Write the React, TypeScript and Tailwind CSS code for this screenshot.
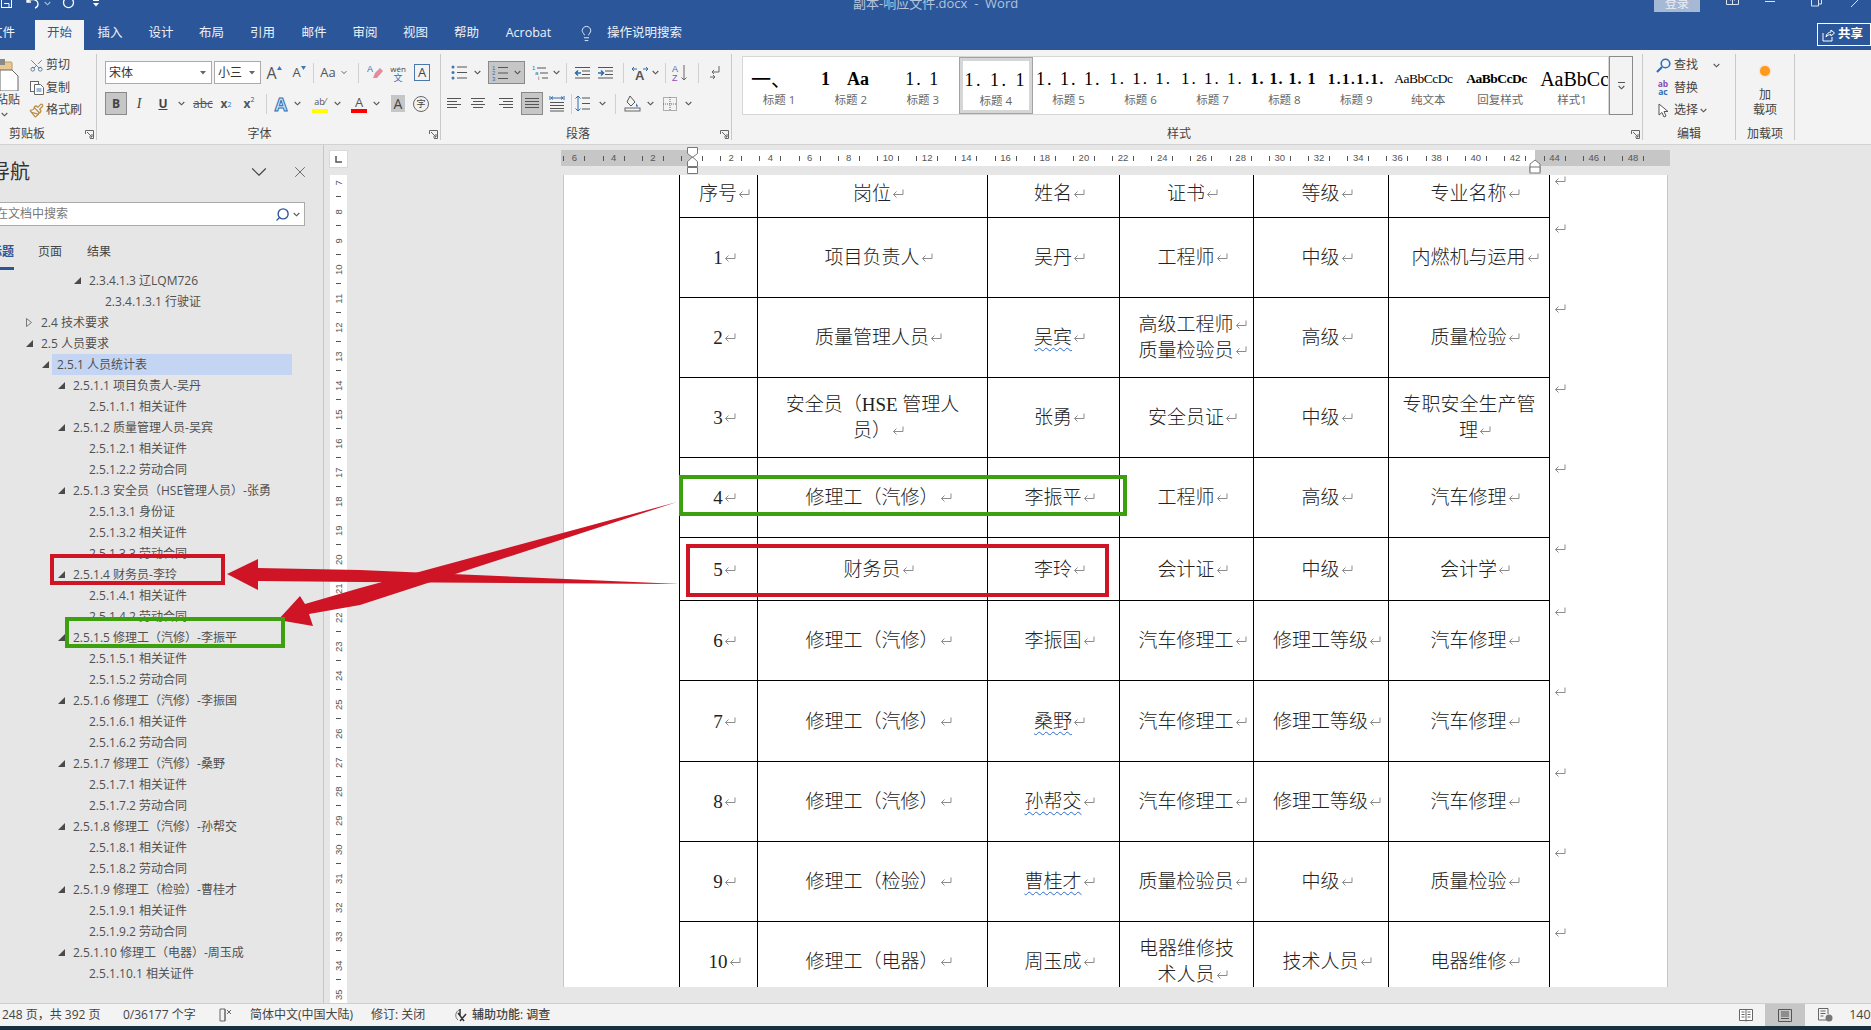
import React from 'react';
import { Scissors, Paintbrush, Lightbulb, Search, X, ChevronDown } from 'lucide-react';

const Chev = ({ c = '#555' }: { c?: string }) => (
  <svg width="7" height="5" viewBox="0 0 7 5" fill="none" stroke={c} strokeWidth="1.1"><path d="M.7 1l2.8 2.8L6.3 1" /></svg>
);
const Cell = ({ className = '', children }: { className?: string; children?: React.ReactNode }) => (
  <div className={`flex shrink-0 items-center justify-center ${className}`}>{children}</div>
);
const VSep = ({ className = '' }: { className?: string }) => (
  <div className={`flex h-full shrink-0 items-center justify-center ${className}`}><div className="h-[20px] w-px bg-[#d0d0d0]" /></div>
);
const Launcher = () => (
  <svg className="absolute bottom-[1px] right-[2px]" width="9" height="9" viewBox="0 0 9 9" fill="none" stroke="#666"><path d="M.5 4V.5h8V8.500H5M2 2l5 5M7 4v3H4" /></svg>
);
const Group = ({ className, label, lp = '', launcher, children }: { className: string; label: string; lp?: string; launcher?: boolean; children: React.ReactNode }) => (
  <div className={`relative flex h-[86px] shrink-0 flex-col border-r border-[#c9c9c9] ${className}`}>
    <div className="h-[72px] overflow-hidden">{children}</div>
    <div className={`h-[14px] text-center text-[12px] leading-[15px] text-[#444] ${lp}`}>{label}</div>
    {launcher && <Launcher />}
  </div>
);

type LK = 'l' | 'c' | 'r' | 'j';
const Lines = ({ k, dist }: { k: LK; dist?: boolean }) => {
  const w = [14, 10, 14, 10];
  return (
    <svg width="16" height="14" viewBox="0 0 16 14" stroke="#555" strokeWidth="1">
      {[1.5, 4.5, 7.5, 10.5].map((y, i) => {
        const len = k === 'j' ? 14 : w[i];
        const x = k === 'l' || k === 'j' ? 1 : k === 'c' ? 8 - len / 2 : 15 - len;
        return <line key={y} x1={x} x2={x + len} y1={y} y2={y} />;
      })}
      {dist && <path d="M3 1.500h10M3 1.500l2-1M13 1.500l-2-1" stroke="#2b6cb0" />}
    </svg>
  );
};
const Bullets = () => (
  <svg width="17" height="15" viewBox="0 0 17 15" stroke="#555">
    {[2, 7.5, 13].map(y => <g key={y}><circle cx="2" cy={y} r="1.500" fill="#3a78b8" stroke="none" /><line x1="6" x2="16" y1={y} y2={y} /></g>)}
  </svg>
);
const Numbered = () => (
  <svg width="17" height="16" viewBox="0 0 17 16" stroke="#555">
    {[2.500, 8, 13.500].map((y, i) => <g key={y}><text x="0" y={y + 2} fontSize="6" fill="#2f6fb5" stroke="none" fontFamily="Liberation Sans">{i + 1}</text><line x1="6" x2="16" y1={y} y2={y} /></g>)}
  </svg>
);
const Multi = () => (
  <svg width="17" height="16" viewBox="0 0 17 16" stroke="#555">
    <text x="0" y="5" fontSize="6" fill="#2f6fb5" stroke="none" fontFamily="Liberation Sans">1</text><line x1="5" x2="14" y1="3" y2="3" />
    <text x="3" y="10" fontSize="6" fill="#2f6fb5" stroke="none" fontFamily="Liberation Sans">a</text><line x1="8" x2="16" y1="8" y2="8" />
    <text x="6" y="15" fontSize="6" fill="#555" stroke="none" fontFamily="Liberation Sans">i</text><line x1="10" x2="16" y1="13" y2="13" />
  </svg>
);
const Indent = ({ dir }: { dir: 'l' | 'r' }) => (
  <svg width="17" height="14" viewBox="0 0 17 14" fill="none">
    <g stroke="#555"><line x1="1" x2="16" y1="1.500" y2="1.500" /><line x1="8" x2="16" y1="5" y2="5" /><line x1="8" x2="16" y1="8.500" y2="8.500" /><line x1="1" x2="16" y1="12" y2="12" /></g>
    <path d={dir === 'l' ? 'M7 7H1.500M4 4.500L1.500 7 4 9.500' : 'M1 7h5.500M4 4.500L6.500 7 4 9.500'} stroke="#2b6cb0" strokeWidth="1.500" />
  </svg>
);

const Tab = ({ className = '', children }: { className: string; children: React.ReactNode }) => (
  <div className={`flex h-full shrink-0 items-center justify-center pb-[4px] text-[12.500px] text-[#eef2f8] ${className}`}>{children}</div>
);

const TitleBar = () => (
  <div className="flex h-[20px] items-start overflow-hidden">
    <div className="flex w-[853px] shrink-0 items-start text-white">
      <svg className="ml-[1px] -mt-[5px]" width="11" height="14" viewBox="0 0 11 14" fill="none" stroke="#fff"><rect x=".5" y=".5" width="10" height="12" /><path d="M3 8.500h5v4H3" /></svg>
      <svg className="ml-[13px] -mt-[4px]" width="16" height="14" viewBox="0 0 16 14" fill="none" stroke="#fff" strokeWidth="1.300"><path d="M2 2v4h4M2 6c3-4 11-3 11 2 0 2-1 3.500-3 4" /></svg>
      <div className="ml-[3px] mt-[1px] opacity-60"><Chev c="#fff" /></div>
      <svg className="ml-[11px] -mt-[4px]" width="14" height="14" viewBox="0 0 14 14" fill="none" stroke="#fff" strokeWidth="1.300"><path d="M3 3a5 5 0 1 0 7 0M10 0v3h3" /></svg>
      <svg className="ml-[16px]" width="8" height="7" viewBox="0 0 8 7" fill="#fff"><rect x="1" y="0" width="6" height="1" /><path d="M1 3h6L4 6.500z" /></svg>
    </div>
    <div className="w-[161px] shrink-0 whitespace-pre text-[13px] leading-[13px] -mt-[3px] text-[#b3c4dd]">副本-响应文件.docx  -  Word</div>
    <div className="ml-[640px] flex h-[12px] w-[46px] shrink-0 justify-center overflow-hidden bg-[#a6b9d4] text-[12px] leading-[12px] text-[#e8eef6]"><span className="-mt-[2px]">登录</span></div>
    <svg className="ml-[26px] -mt-[2px]" width="13" height="9" viewBox="0 0 13 9" fill="none" stroke="#dbe4f0"><path d="M.5 0v6.500h12V0M6.500 6V1M4.500 2.500l2-2 2 2" /></svg>
    <div className="ml-[26px] mt-[1px] h-px w-[10px] bg-[#dbe4f0]" />
    <svg className="ml-[36px] -mt-[4px]" width="11" height="11" viewBox="0 0 11 11" fill="none" stroke="#dbe4f0"><path d="M.5 3v7h7V3zM3 3V.5h7.500V8H8" /></svg>
    <svg className="ml-[27px] -mt-[3px]" width="12" height="10" viewBox="0 0 12 10" fill="none" stroke="#dbe4f0"><path d="M2 10L12 0" /></svg>
  </div>
);

const TabBar = () => (
  <div className="flex h-[30px] items-stretch">
    <Tab className="w-[35px] justify-end overflow-hidden pr-[20px]"><span className="whitespace-nowrap">文件</span></Tab>
    <div className="flex h-full w-[49px] shrink-0 items-center justify-center bg-[#f3f3f3] pb-[4px] text-[12.500px] text-[#2b579a]">开始</div>
    <Tab className="w-[52px]">插入</Tab>
    <Tab className="w-[50px]">设计</Tab>
    <Tab className="w-[51px]">布局</Tab>
    <Tab className="w-[51px]">引用</Tab>
    <Tab className="w-[52px]">邮件</Tab>
    <Tab className="w-[50px]">审阅</Tab>
    <Tab className="w-[51px]">视图</Tab>
    <Tab className="w-[51px]">帮助</Tab>
    <Tab className="w-[73px]">Acrobat</Tab>
    <Tab className="w-[42px] pr-[0px]"><Lightbulb size={17} strokeWidth={1.300} color="#eef2f8" /></Tab>
    <Tab className="w-[80px] justify-start">操作说明搜索</Tab>
    <div className="flex-1" />
    <div className="mb-[4px] mt-[3px] flex w-[54px] shrink-0 items-center gap-[3px] border border-white pl-[4px] text-[12.500px] font-bold text-white">
      <svg width="13" height="14" viewBox="0 0 13 14" fill="none" stroke="#fff"><path d="M1 5v8h9V9M4 9c0-3 3-5 5-5V2l3.500 3L9 8V6.500C7 6.500 5 7.500 4 9z" /></svg>
      <span className="whitespace-nowrap">共享</span>
    </div>
  </div>
);

const ClipItem = ({ icon, text }: { icon: React.ReactNode; text: string }) => (
  <div className="flex h-[22.500px] items-center">
    <Cell className="w-[19px]">{icon}</Cell>
    <span className="whitespace-nowrap text-[12px] text-[#444]">{text}</span>
  </div>
);

const Clipboard = () => (
  <Group className="w-[97px]" label="剪贴板" lp="pr-[42px]" launcher>
    <div className="flex">
      <div className="flex w-[20px] shrink-0 flex-col items-end overflow-hidden pt-[4px]">
        <svg className="shrink-0" width="34" height="33" viewBox="0 0 34 33">
          <rect x="2" y="4" width="24" height="26" rx="1" fill="#e9c98f" stroke="#b89a63" />
          <rect x="9" y="1" width="10" height="6" fill="#8a8a8a" />
          <path d="M14 12h12l6 6v15H14z" fill="#fff" stroke="#666" />
        </svg>
        <span className="mt-[1px] whitespace-nowrap text-[12px] leading-[16px] text-[#444]">粘贴</span>
        <div className="mt-[4px] mr-[12px]"><Chev /></div>
      </div>
      <div className="ml-[7px]">
        <ClipItem icon={<Scissors size={15} color="#4a6f94" strokeWidth={1.300} className="-rotate-90" />} text="剪切" />
        <ClipItem icon={<svg width="14" height="14" viewBox="0 0 14 14" fill="#fff" stroke="#666"><rect x=".5" y=".5" width="8" height="10" /><path d="M4.500 3.500h6l3 3v7h-9z" /><path d="M6.500 8h5M6.500 10h5" stroke="#3a78b8" /></svg>} text="复制" />
        <ClipItem icon={<Paintbrush size={15} color="#b98d45" strokeWidth={2} />} text="格式刷" />
      </div>
    </div>
  </Group>
);

const Sel = ({ className, text }: { className: string; text: string }) => (
  <div className={`flex h-[23px] shrink-0 items-center justify-between border border-[#ababab] bg-white pl-[3px] pr-[5px] text-[12px] text-[#333] ${className}`}>
    <span className="whitespace-nowrap">{text}</span>
    <svg width="6" height="4" viewBox="0 0 6 4" fill="#666"><path d="M0 0h6L3 3.500z" /></svg>
  </div>
);
const BigA = ({ c = '#555', s = 'text-[16px]' }: { c?: string; s?: string }) => (
  <span className={`font-['Open_Sans',sans-serif] leading-none ${s}`} style={{ color: c }}>A</span>
);

const FontGroup = () => (
  <Group className="w-[344px]" label="字体" lp="pr-[18px]" launcher>
    <div className="flex h-[23px] mt-[7px] pl-[8px]">
      <Sel className="w-[107px]" text="宋体" />
      <Sel className="ml-[2px] w-[47px]" text="小三" />
      <Cell className="w-[26px] items-center gap-0"><BigA /><svg className="mb-[9px]" width="5" height="4" viewBox="0 0 5 4" fill="#3a78b8"><path d="M2.500 0L5 4H0z" /></svg></Cell>
      <Cell className="w-[24px]"><BigA s="text-[13px]" /><svg className="mb-[9px]" width="5" height="4" viewBox="0 0 5 4" fill="#3a78b8"><path d="M0 0h5L2.500 4z" /></svg></Cell>
      <VSep className="w-[4px]" />
      <Cell className="w-[26px] text-[13px] text-[#555]">Aa</Cell>
      <Cell className="w-[6px]"><Chev /></Cell>
      <div className="w-[9px]" />
      <VSep className="w-[4px]" />
      <Cell className="ml-[3px] w-[24px]">
        <svg width="16" height="18" viewBox="0 0 16 18"><path d="M8 9l5-5 3 3-6 7-4 0z" fill="#e88a9c" /><text x="0" y="8" fontSize="9" fill="#2f6fb5" fontFamily="Liberation Sans">A</text></svg>
      </Cell>
      <Cell className="w-[22px] flex-col text-[8px] leading-[9px] text-[#444]"><span>wén</span><span className="text-[9px] text-[#2f6fb5]">文</span></Cell>
      <Cell className="ml-[1px] w-[24px]"><div className="flex h-[17px] w-[16px] items-center justify-center border border-[#4a78a8] text-[13px] leading-none text-[#444]">A</div></Cell>
    </div>
    <div className="mt-[8px] flex h-[23px] pl-[8px]">
      <Cell className="w-[22px] border border-[#8a8a8a] bg-[#c6c6c6] text-[12px] font-bold text-[#444]">B</Cell>
      <Cell className="w-[24px] font-['Liberation_Serif',serif] text-[14px] italic text-[#444]">I</Cell>
      <Cell className="w-[24px] text-[12px] text-[#444] underline font-bold">U</Cell>
      <Cell className="w-[12px]"><Chev /></Cell>
      <div className="w-[4px]" />
      <Cell className="w-[24px] text-[12px] text-[#555] line-through">abc</Cell>
      <Cell className="w-[22px] text-[12px] font-bold text-[#555]">x<sub className="text-[7px] font-normal text-[#2f6fb5]">2</sub></Cell>
      <Cell className="ml-[1px] w-[22px] text-[12px] font-bold text-[#555]">x<sup className="text-[7px] font-normal text-[#555]">2</sup></Cell>
      <VSep className="w-[12px]" />
      <Cell className="w-[18px] text-[18px] font-bold leading-none text-[#cfe0f4] [-webkit-text-stroke:1px_#2f6fb5]">A</Cell>
      <Cell className="w-[14px]"><Chev /></Cell>
      <div className="w-[4px]" />
      <Cell className="w-[24px]"><div className="flex flex-col items-center"><span className="text-[9px] leading-[14px] text-[#555]">ab⁄</span><div className="h-[4px] w-[16px] bg-[#ffff00]" /></div></Cell>
      <Cell className="w-[10px]"><Chev /></Cell>
      <div className="w-[5px]" />
      <Cell className="w-[24px]"><div className="flex flex-col items-center"><span className="text-[13px] leading-[14px] text-[#555]">A</span><div className="h-[4px] w-[16px] bg-[#ff0000]" /></div></Cell>
      <Cell className="w-[10px]"><Chev /></Cell>
      <div className="w-[5px]" />
      <Cell className="w-[24px]"><div className="flex h-[17px] w-[14px] items-center justify-center bg-[#c6c6c6] text-[14px] text-[#444]">A</div></Cell>
      <Cell className="w-[22px]"><div className="flex h-[16px] w-[16px] items-center justify-center rounded-full border border-[#666] text-[9px] text-[#444]">字</div></Cell>
    </div>
  </Group>
);

const ParaGroup = () => (
  <Group className="w-[291px]" label="段落" lp="pr-[16px]" launcher>
    <div className="mt-[7px] flex h-[23px] pl-[6px]">
      <Cell className="w-[24px]"><Bullets /></Cell>
      <Cell className="w-[12px]"><Chev /></Cell>
      <div className="w-[5px]" />
      <Cell className="w-[37px] gap-[5px] border border-[#8a8a8a] bg-[#c6c6c6]"><Numbered /><Chev /></Cell>
      <div className="w-[4px]" />
      <Cell className="w-[22px]"><Multi /></Cell>
      <Cell className="w-[10px]"><Chev /></Cell>
      <VSep className="w-[10px]" />
      <Cell className="w-[22px]"><Indent dir="l" /></Cell>
      <Cell className="w-[24px]"><Indent dir="r" /></Cell>
      <VSep className="w-[12px]" />
      <Cell className="w-[22px]">
        <svg width="18" height="14" viewBox="0 0 18 14" fill="none"><path d="M1 3h5M1 3l2-2M1 3l2 2M17 3h-5M17 3l-2-2M17 3l-2 2" stroke="#2b6cb0" /><text x="4" y="14" fontSize="13" fontWeight="bold" fill="#555" fontFamily="Liberation Sans">A</text></svg>
      </Cell>
      <Cell className="w-[8px]"><Chev /></Cell>
      <VSep className="w-[12px]" />
      <Cell className="w-[18px]">
        <svg width="16" height="18" viewBox="0 0 16 18" fill="none"><text x="0" y="8" fontSize="9" fill="#2f6fb5" fontFamily="Liberation Sans">A</text><text x="0" y="17" fontSize="9" fill="#8a4fb5" fontFamily="Liberation Sans">Z</text><path d="M12 1v15M9.500 13.500L12 16l2.500-2.500" stroke="#666" /></svg>
      </Cell>
      <VSep className="w-[18px]" />
      <Cell className="w-[16px]"><svg width="12" height="15" viewBox="0 0 12 15" fill="none" stroke="#666"><path d="M10 1v6H3M5 5L3 7l2 2M4 10l2 2-2 2M1 12h5" /></svg></Cell>
    </div>
    <div className="mt-[8px] flex h-[23px] pl-[1px]">
      <Cell className="w-[23px]"><Lines k="l" /></Cell>
      <Cell className="w-[26px]"><Lines k="c" /></Cell>
      <Cell className="w-[30px]"><Lines k="r" /></Cell>
      <Cell className="w-[22px] border border-[#8a8a8a] bg-[#c6c6c6]"><Lines k="j" /></Cell>
      <Cell className="ml-[2px] w-[24px]">
        <svg width="16" height="17" viewBox="0 0 16 17" fill="none"><path d="M1 1v4M15 1v4M2 3h12M4 1.500L2 3l2 1.500M12 1.500L14 3l-2 1.500" stroke="#2b6cb0" /><path d="M1 7.500h14M1 10.500h14M1 13.500h14M1 16h14" stroke="#555" /></svg>
      </Cell>
      <VSep className="w-[4px]" />
      <Cell className="w-[19px]"><svg width="16" height="17" viewBox="0 0 16 17" fill="none"><path d="M3 1v15M.5 3.500L3 1l2.500 2.500M.5 13.500L3 16l2.500-2.500" stroke="#2b6cb0" /><path d="M7 3h8M7 8.500h8M7 14h8" stroke="#555" /></svg></Cell>
      <div className="w-[4px]" />
      <Cell className="w-[12px]"><Chev /></Cell>
      <VSep className="w-[14px]" />
      <Cell className="w-[20px]"><svg width="17" height="17" viewBox="0 0 17 17" fill="none"><path d="M6 1l5 6-4 4-4-4z" stroke="#555" /><path d="M12 8c1 2 2 2 2 3s-2 1-2 0z" fill="#3a78b8" /><rect x="1" y="13" width="15" height="3" stroke="#666" /></svg></Cell>
      <div className="w-[2px]" />
      <Cell className="w-[12px]"><Chev /></Cell>
      <div className="w-[4px]" />
      <Cell className="w-[20px]"><svg width="14" height="14" viewBox="0 0 14 14" fill="none" stroke="#666" strokeDasharray="1 1"><rect x=".5" y=".5" width="13" height="13" /><path d="M7 0v14M0 7h14" /></svg></Cell>
      <div className="w-[2px]" />
      <Cell className="w-[12px]"><Chev /></Cell>
    </div>
  </Group>
);

const styleItems: { t: string; l: string; c: string }[] = [
  { t: '一、', l: '标题 1', c: "text-[20px] justify-start pl-[8px] font-['Noto_Sans_CJK_SC',sans-serif]" },
  { t: '1    Aa', l: '标题 2', c: 'text-[18px] font-bold whitespace-pre justify-start pl-[6px]' },
  { t: '1. 1', l: '标题 3', c: 'text-[18px] tracking-[2px]' },
  { t: '1. 1. 1', l: '标题 4', c: 'text-[18px] tracking-[2.5px]' },
  { t: '1. 1. 1.', l: '标题 5', c: 'text-[18px] tracking-[2px]' },
  { t: '1. 1. 1.', l: '标题 6', c: 'text-[17px] tracking-[2px]' },
  { t: '1. 1. 1.', l: '标题 7', c: 'text-[17px] tracking-[2px]' },
  { t: '1. 1. 1. 1', l: '标题 8', c: 'text-[16px] font-bold justify-start pl-[2px] tracking-[1px]' },
  { t: '1.1.1.1.', l: '标题 9', c: 'text-[15px] font-bold tracking-[1.5px]' },
  { t: 'AaBbCcDc', l: '纯文本', c: "text-[13.500px] font-['Liberation_Mono',monospace] tracking-[-0.5px] justify-start pl-[2px]" },
  { t: 'AaBbCcDc', l: '回复样式', c: "text-[13.500px] font-bold text-[#44546a] font-['Liberation_Mono',monospace] tracking-[-0.5px] justify-start pl-[2px]" },
  { t: 'AaBbCc', l: '样式1', c: 'text-[20px] justify-start pl-[4px]' },
];

const Styles = () => (
  <Group className="w-[911px]" label="样式" lp="pr-[16px]" launcher>
    <div className="ml-[10px] mt-[2px] flex h-[59px]">
      <div className="flex w-[867px] border border-[#d6d6d6] bg-white">
        {styleItems.map((s, i) => (
          <div key={i} className={`flex flex-1 flex-col items-stretch overflow-hidden ${i === 3 ? 'border border-[#a3a3a3] shadow-[inset_0_0_0_3px_#d6d6d6]' : ''}`}>
            <div className={`flex h-[35px] items-end justify-center overflow-hidden whitespace-nowrap pb-[1px] font-['Liberation_Serif',serif] leading-[24px] text-black ${s.c}`}>{s.t}</div>
            <div className="whitespace-nowrap text-center text-[11.500px] leading-[15px] text-[#666]">{s.l}</div>
          </div>
        ))}
      </div>
      <div className="flex w-[24px] flex-col items-center justify-center border border-[#8a8a8a] border-l-[#8a8a8a]">
        <div className="h-px w-[7px] bg-[#555]" />
        <div className="mt-[2px]"><Chev /></div>
      </div>
    </div>
  </Group>
);

const EditGroup = () => (
  <Group className="w-[93px]" label="编辑">
    <div className="pl-[11px]">
      <div className="flex h-[22.500px] items-center">
        <Cell className="w-[18px]"><svg width="15" height="15" viewBox="0 0 15 15" fill="none" stroke="#2f6fb5" strokeWidth="1.600"><circle cx="9.500" cy="5.500" r="4.300" /><path d="M6 9l-5 5" strokeWidth="2.200" /></svg></Cell>
        <span className="ml-[2px] text-[12px] text-[#444]">查找</span>
        <div className="ml-[15px]"><Chev /></div>
      </div>
      <div className="flex h-[22.500px] items-center">
        <Cell className="w-[18px] flex-col text-[8.500px] font-bold leading-[8px]"><span className="text-[#8a4fb5]">ab</span><span className="text-[#2f6fb5]">ac</span></Cell>
        <span className="ml-[2px] text-[12px] text-[#444]">替换</span>
      </div>
      <div className="flex h-[22.500px] items-center">
        <Cell className="w-[18px]"><svg width="11" height="15" viewBox="0 0 11 15" fill="#fff" stroke="#555"><path d="M1 1v11l3-2.500 2 4.500 2-1-2-4.500h4z" /></svg></Cell>
        <span className="ml-[2px] text-[12px] text-[#444]">选择</span>
        <div className="ml-[2px]"><Chev /></div>
      </div>
    </div>
  </Group>
);

const AddinGroup = () => (
  <Group className="w-[59px]" label="加载项">
    <div className="flex flex-col items-center pt-[12px]">
      <div className="h-[10px] w-[10px] rounded-full bg-[#ff9a1f] shadow-[0_0_2px_#ffb566]" />
      <div className="mt-[11px] text-center text-[12px] leading-[15px] text-[#444]">加<br />载项</div>
    </div>
  </Group>
);

const Ribbon = () => (
  <div className="flex h-[95px] border-b border-[#d2d2d2] bg-[#f3f3f3] pt-[4px]">
    <Clipboard /><FontGroup /><ParaGroup /><Styles /><EditGroup /><AddinGroup />
  </div>
);

const navRows: [string, number, 'o' | 'c' | ''][] = [
  ['2.3.4.1.3 辽LQM726', 3, 'o'], ['2.3.4.1.3.1 行驶证', 4, ''], ['2.4 技术要求', 0, 'c'], ['2.5 人员要求', 0, 'o'],
  ['2.5.1 人员统计表', 1, 'o'], ['2.5.1.1 项目负责人-吴丹', 2, 'o'], ['2.5.1.1.1 相关证件', 3, ''],
  ['2.5.1.2 质量管理人员-吴宾', 2, 'o'], ['2.5.1.2.1 相关证件', 3, ''], ['2.5.1.2.2 劳动合同', 3, ''],
  ['2.5.1.3 安全员（HSE管理人员）-张勇', 2, 'o'], ['2.5.1.3.1 身份证', 3, ''], ['2.5.1.3.2 相关证件', 3, ''], ['2.5.1.3.3 劳动合同', 3, ''],
  ['2.5.1.4 财务员-李玲', 2, 'o'], ['2.5.1.4.1 相关证件', 3, ''], ['2.5.1.4.2 劳动合同', 3, ''],
  ['2.5.1.5 修理工（汽修）-李振平', 2, 'o'], ['2.5.1.5.1 相关证件', 3, ''], ['2.5.1.5.2 劳动合同', 3, ''],
  ['2.5.1.6 修理工（汽修）-李振国', 2, 'o'], ['2.5.1.6.1 相关证件', 3, ''], ['2.5.1.6.2 劳动合同', 3, ''],
  ['2.5.1.7 修理工（汽修）-桑野', 2, 'o'], ['2.5.1.7.1 相关证件', 3, ''], ['2.5.1.7.2 劳动合同', 3, ''],
  ['2.5.1.8 修理工（汽修）-孙帮交', 2, 'o'], ['2.5.1.8.1 相关证件', 3, ''], ['2.5.1.8.2 劳动合同', 3, ''],
  ['2.5.1.9 修理工（检验）-曹桂才', 2, 'o'], ['2.5.1.9.1 相关证件', 3, ''], ['2.5.1.9.2 劳动合同', 3, ''],
  ['2.5.1.10 修理工（电器）-周玉成', 2, 'o'], ['2.5.1.10.1 相关证件', 3, ''],
];

const Nav = () => (
  <div className="flex w-[324px] shrink-0 flex-col overflow-hidden border-r border-[#c6c6c6] bg-[#e6e6e6]">
    <div className="flex h-[50px] items-center pt-[4px]">
      <span className="-ml-[10px] whitespace-nowrap text-[20px] text-[#333]">导航</span>
      <div className="flex-1" />
      <ChevronDown size={26} strokeWidth={1} color="#444" className="mr-[19px]" />
      <X size={18} strokeWidth={1} color="#444" className="mr-[14px]" />
    </div>
    <div className="mt-[7px] flex h-[24px] w-[305px] items-center border border-l-0 border-[#ababab] bg-white pr-[4px]">
      <span className="-ml-[4px] whitespace-nowrap text-[12px] text-[#777]">在文档中搜索</span>
      <div className="flex-1" />
      <Search size={15} strokeWidth={2.200} color="#2b579a" className="-scale-x-100" />
      <div className="ml-[3px]"><Chev /></div>
    </div>
    <div className="flex h-[44px] items-start pt-[18px] text-[12px] text-[#444]">
      <div className="flex h-[26px] w-[14px] flex-col items-end overflow-hidden border-b-[3px] border-[#2b579a]">
        <span className="whitespace-nowrap font-semibold leading-[16px] text-[#2b579a]">标题</span>
      </div>
      <span className="ml-[24px] leading-[16px]">页面</span>
      <span className="ml-[25px] leading-[16px]">结果</span>
    </div>
    <div className="w-[292px]">
      {navRows.map(([t, l, tri], i) => (
        <div key={i} className="flex h-[21px] items-stretch" style={{ paddingLeft: 22 + 16 * l }}>
          <Cell className="w-[14px]">
            {tri === 'o' && <svg width="7" height="7" viewBox="0 0 7 7" fill="#4a4a4a"><path d="M7 0v7H0z" /></svg>}
            {tri === 'c' && <svg width="6" height="9" viewBox="0 0 6 9" fill="none" stroke="#777"><path d="M.5.500l5 4-5 4z" /></svg>}
          </Cell>
          <div className={`flex flex-1 items-center whitespace-nowrap pl-[5px] text-[12px] text-[#505050] ${i === 4 ? 'bg-[#c3d5f2]' : ''}`}>{t}</div>
        </div>
      ))}
    </div>
  </div>
);

const VRuler = () => {
  const nums = Array.from({ length: 29 }, (_, i) => 7 + i);
  return (
    <div className="flex w-[237px] shrink-0 flex-col pl-[5px] pt-[5px]">
      <div className="flex h-[18px] w-[19px] items-center justify-center border border-[#d9d9d9] bg-white">
        <svg width="7" height="7" viewBox="0 0 7 7" fill="none" stroke="#555" strokeWidth="1.500"><path d="M1 0v6h6" /></svg>
      </div>
      <div className="ml-[1px] mt-[7px] w-[17px] flex-1 overflow-hidden bg-white">
        {nums.map(n => (
          <div key={n}>
            <div className="flex h-[14.500px] items-center justify-center overflow-visible">
              <span className="-rotate-90 font-['Liberation_Sans',sans-serif] text-[9.500px] leading-none text-[#555]">{n}</span>
            </div>
            <div className="flex h-[14.500px] items-center justify-center"><div className="h-px w-[5px] bg-[#555]" /></div>
          </div>
        ))}
      </div>
    </div>
  );
};

const RCell = ({ n }: { n?: number }) => (
  <div className="flex w-[39.200px] shrink-0 items-center justify-center gap-[7px] font-['Liberation_Sans',sans-serif] text-[9.500px] text-[#555]">
    <div className="h-[5px] w-px bg-[#555]" />
    <span className="w-[6px] whitespace-nowrap text-center flex justify-center">{n}</span>
    <div className="h-[5px] w-px bg-[#555]" />
  </div>
);

const HRuler = () => (
  <div className="flex h-[16px] w-[1109px] overflow-hidden">
    <div className="flex w-[131px] shrink-0 justify-end bg-[#c6c6c6]">
      <RCell n={6} /><RCell n={4} /><RCell n={2} />
      <div className="flex w-[19.600px] shrink-0 items-center"><div className="ml-[9px] h-[5px] w-px bg-[#555]" /></div>
    </div>
    <div className="flex w-[843px] shrink-0 bg-white">
      <div className="flex w-[19.600px] shrink-0 items-center justify-end"><div className="mr-[9px] h-[5px] w-px bg-[#555]" /></div>
      {[2, 4, 6, 8, 10, 12, 14, 16, 18, 20, 22, 24, 26, 28, 30, 32, 34, 36, 38, 40, 42].map(n => <RCell key={n} n={n} />)}
    </div>
    <div className="flex flex-1 bg-[#c6c6c6]">
      <RCell n={44} /><RCell n={46} /><RCell n={48} />
    </div>
  </div>
);

const Ret = () => (
  <svg className="ml-[1px] inline-block align-[1px]" width="12" height="10" viewBox="0 0 12 10" fill="none" stroke="#8c8c8c"><path d="M11 .5V5.500H1.500M4.500 2.500l-3 3 3 3" /></svg>
);

type Row = { c: (string | string[])[]; h: string; wavy?: boolean };
const rows: Row[] = [
  { c: ['序号', '岗位', '姓名', '证书', '等级', '专业名称'], h: 'h-[42px]' },
  { c: ['1', '项目负责人', '吴丹', '工程师', '中级', '内燃机与运用'], h: 'h-[80px]' },
  { c: ['2', '质量管理人员', '吴宾', ['高级工程师', '质量检验员'], '高级', '质量检验'], h: 'h-[80px]', wavy: true },
  { c: ['3', ['安全员（HSE 管理人~', '员）'], '张勇', '安全员证', '中级', ['专职安全生产管~', '理']], h: 'h-[80px]' },
  { c: ['4', '修理工（汽修）', '李振平', '工程师', '高级', '汽车修理'], h: 'h-[80px]' },
  { c: ['5', '财务员', '李玲', '会计证', '中级', '会计学'], h: 'h-[63px]' },
  { c: ['6', '修理工（汽修）', '李振国', '汽车修理工', '修理工等级', '汽车修理'], h: 'h-[80px]' },
  { c: ['7', '修理工（汽修）', '桑野', '汽车修理工', '修理工等级', '汽车修理'], h: 'h-[81px]', wavy: true },
  { c: ['8', '修理工（汽修）', '孙帮交', '汽车修理工', '修理工等级', '汽车修理'], h: 'h-[80px]', wavy: true },
  { c: ['9', '修理工（检验）', '曹桂才', '质量检验员', '中级', '质量检验'], h: 'h-[80px]', wavy: true },
  { c: ['10', '修理工（电器）', '周玉成', ['电器维修技~', '术人员'], '技术人员', '电器维修'], h: 'h-[80px]' },
];

const Page = () => (
  <div className="ml-[2px] mt-[9px] h-[812px] w-[1105px] overflow-hidden border-x border-[#c6c6c6] bg-white pl-[115px]">
    <table className="w-[895px] table-fixed border-collapse font-['Liberation_Serif','Noto_Sans_CJK_SC',serif] text-[19px] font-light leading-[26px] text-[#222]">
      <colgroup>
        <col className="w-[78px]" /><col className="w-[230px]" /><col className="w-[132px]" /><col className="w-[134px]" /><col className="w-[135px]" /><col className="w-[161px]" /><col className="w-[25px]" />
      </colgroup>
      <tbody>
        {rows.map((r, i) => (
          <tr key={i} className={r.h}>
            {r.c.map((c, j) => (
              <td key={j} className={`whitespace-nowrap border border-black pl-[16px] pr-[4px] text-center align-middle ${i === 0 ? 'border-t-0 pb-[4px]' : 'pt-[2px]'}`}>
                {Array.isArray(c)
                  ? c.map(x => x.endsWith('~')
                    ? <div key={x} className="-ml-[12px]">{x.slice(0, -1)}</div>
                    : <div key={x}>{x}<Ret /></div>)
                  : <span className={r.wavy && j === 2 ? 'underline decoration-[#2b6bd0] decoration-wavy decoration-1 underline-offset-[3px]' : ''}>{c}<Ret /></span>}
              </td>
            ))}
            <td className={`align-top pl-[3px] leading-[10px] ${i === 0 ? 'pt-[1px]' : 'pt-[7px]'}`}><Ret /></td>
          </tr>
        ))}
      </tbody>
    </table>
  </div>
);

const StatusBar = () => (
  <div className="flex h-[23px] items-stretch border-t border-[#cfcfcf] bg-[#f3f3f3] text-[12px] text-[#444]">
    <div className="flex items-center pl-[2px]">
      <span className="w-[121px] whitespace-nowrap">248 页，共 392 页</span>
      <span className="w-[96px] whitespace-nowrap">0/36177 个字</span>
      <svg className="mr-[18px]" width="13" height="14" viewBox="0 0 13 14" fill="none" stroke="#666"><path d="M1 1h5v12H1zM6 1v12M8 2l4 4M12 2L8 6" /></svg>
      <span className="w-[121px] whitespace-nowrap">简体中文(中国大陆)</span>
      <span className="w-[83px] whitespace-nowrap">修订: 关闭</span>
      <svg className="mr-[3px]" width="15" height="15" viewBox="0 0 15 15" fill="none"><path d="M5 2a6 6 0 0 0-1 10" stroke="#777" /><path d="M6 1v7M4 5l6 8M12 6l-6 7" stroke="#333" strokeWidth="1.500" /></svg>
      <span className="whitespace-nowrap font-medium">辅助功能: 调查</span>
    </div>
    <div className="flex-1" />
    <div className="flex items-stretch">
      <Cell className="w-[21px]"><svg width="14" height="13" viewBox="0 0 14 13" fill="#fff" stroke="#666"><path d="M.5.500h13v11H.5zM7 .500v12M2.500 3h3M2.500 5.500h3M2.500 8h3M8.500 3h3M8.500 5.500h3M8.500 8h3" /></svg></Cell>
      <Cell className="ml-[9px] w-[40px] bg-[#c6c6c6]"><svg width="14" height="13" viewBox="0 0 14 13" fill="none" stroke="#555"><path d="M.5.500h13v12H.5zM3 3h8M3 5h8M3 7h8M3 9.500h8" /></svg></Cell>
      <Cell className="w-[40px]"><svg width="15" height="14" viewBox="0 0 15 14" fill="none" stroke="#666"><path d="M8 12H.5V.5H10V6M2.500 3h5M2.500 5.500h5M2.500 8h3" /><circle cx="11" cy="10" r="3.500" fill="#777" stroke="none" /></svg></Cell>
      <div className="flex w-[26px] items-center justify-end overflow-hidden"><span className="-mr-[10px] whitespace-nowrap text-[12.500px]">140%</span></div>
    </div>
  </div>
);

const Overlay = () => (
  <svg className="pointer-events-none absolute left-0 top-0" width="1871" height="1030" viewBox="0 0 1871 1030" fill="none">
    <path d="M687.500 147.500h10v6l-5 4-5-4zM692.500 157l5 4.500v5h-10v-5zM687.500 167.500h10v6h-10z" fill="#fff" stroke="#777" />
    <path d="M1535 160l5 4v8h-10v-8z" fill="#fff" stroke="#777" />
    <rect x="1530" y="167" width="10" height="6" fill="#fff" stroke="#777" />
    <path d="M680 584 L360 582 L258 581 L258 590 L227 574 L258 559 L258 568 L360 570 Z" fill="#cf1426" />
    <path d="M677 502 L360 588 L305 604 L300 596 L278 620 L313 626 L309 614 L360 605 Z" fill="#cf1426" />
    <rect x="52" y="556" width="171" height="27" stroke="#cf1426" strokeWidth="4" />
    <rect x="67" y="619" width="216" height="27" stroke="#3da00e" strokeWidth="4" />
    <rect x="681" y="477" width="444" height="37" stroke="#3da00e" strokeWidth="4" />
    <rect x="688" y="546" width="419" height="49" stroke="#cf1426" strokeWidth="4" />
  </svg>
);

export default function App() {
  return (
    <div className="relative flex h-[1030px] w-[1871px] flex-col overflow-hidden bg-[#e6e6e6] font-['Open_Sans','Noto_Sans_CJK_SC',sans-serif]">
      <div className="bg-[#2b579a]"><TitleBar /><TabBar /></div>
      <Ribbon />
      <div className="flex flex-1 overflow-hidden">
        <Nav />
        <VRuler />
        <div className="flex flex-1 flex-col pt-[5px]">
          <HRuler />
          <Page />
        </div>
      </div>
      <StatusBar />
      <div className="h-[4px] bg-[#17303f]" />
      <Overlay />
    </div>
  );
}
